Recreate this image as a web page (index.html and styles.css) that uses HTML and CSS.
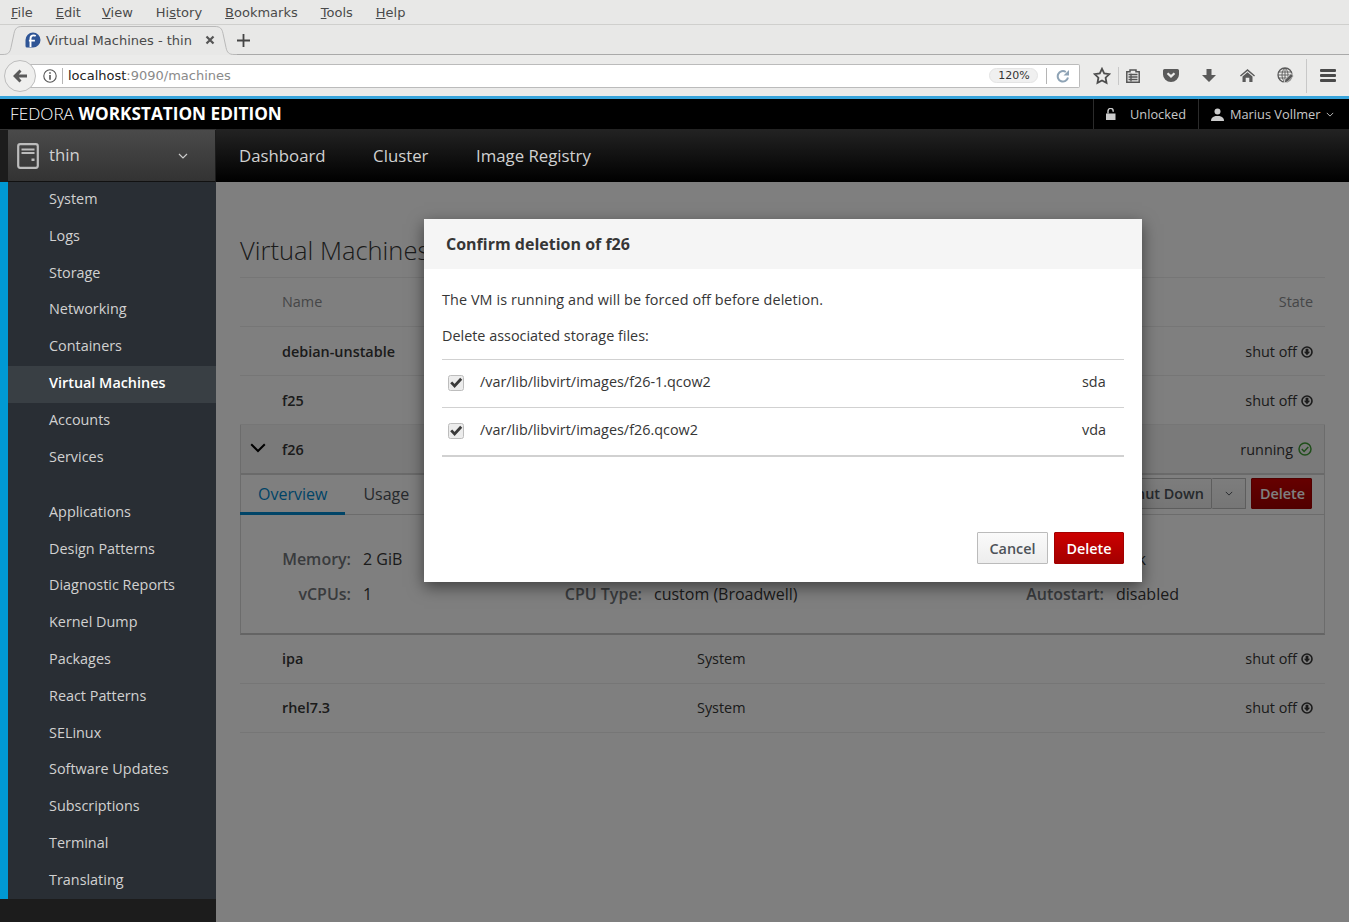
FILE: index.html
```html
<!DOCTYPE html>
<html lang="en">
<head>
<meta charset="utf-8">
<title>Virtual Machines - thin</title>
<link rel="stylesheet" href="styles.css">
</head>
<body>
<svg class="defs" width="0" height="0" aria-hidden="true">
  <symbol id="off" viewBox="0 0 12 12"><circle cx="6" cy="6" r="5" fill="none" stroke="currentColor" stroke-width="1.6"/><path d="M4.600 2.700h2.800v3h1.700L6 9.300 2.900 5.700h1.700z" fill="currentColor"/></symbol>
  <symbol id="caret" viewBox="0 0 10 6"><path d="M1 1l4 4 4-4" fill="none" stroke="currentColor" stroke-width="1.2"/></symbol>
  <symbol id="check" viewBox="0 0 16 16"><rect x=".5" y=".5" width="15" height="15" rx="2" fill="#ececec" stroke="#bdbdbd"/><path d="M3.200 7.400l3.400 3.600 6.600-7.200" fill="none" stroke="#3a3a3a" stroke-width="2.800"/></symbol>
</svg>

<div class="menubar">
  <span><u>F</u>ile</span><span><u>E</u>dit</span><span class="m-view"><u>V</u>iew</span><span>Hi<u>s</u>tory</span><span><u>B</u>ookmarks</span><span><u>T</u>ools</span><span><u>H</u>elp</span>
</div>

<div class="tabbar">
  <div class="tab">
    <svg class="tab-shape" width="237" height="30" viewBox="0 0 237 30"><path d="M0 29.500h3c5 0 7-2 8-7l3-14c1-5 3-7 8-7h193c5 0 7 2 8 7l3 14c1 5 3 7 8 7h3" fill="none" stroke="#b9b9b9"/></svg>
    <svg class="favicon" width="16" height="16" viewBox="0 0 16 16"><path d="M8 .5a7.500 7.500 0 0 1 0 15H2A1.500 1.500 0 0 1 .5 14V8A7.500 7.500 0 0 1 8 .5z" fill="#2f5596"/><path d="M5.500 15V6.600C5.500 4.600 7 3.400 8.700 3.400c.8 0 1.400.2 2 .6M3.900 8.600h6" fill="none" stroke="#fff" stroke-width="1.900"/></svg>
    <span class="tab-title">Virtual Machines - thin</span>
    <svg class="tab-x" width="10" height="10" viewBox="0 0 10 10"><path d="M1.500 1.500l7 7m0-7l-7 7" stroke="#555" stroke-width="2.200"/></svg>
  </div>
  <svg class="newtab" width="13" height="13" viewBox="0 0 13 13"><path d="M6.500 0v13M0 6.500h13" stroke="#444" stroke-width="1.800"/></svg>
</div>

<div class="toolbar">
  <div class="back"><svg width="16" height="16" viewBox="0 0 16 16"><path d="M7.500 1.500L1 8l6.500 6.500 2-2L6.800 9.600H15V6.400H6.800l2.700-2.900z" fill="#5a5a5a"/></svg></div>
  <div class="urlbar">
    <svg class="info" width="14" height="14" viewBox="0 0 14 14"><circle cx="7" cy="7" r="6.200" fill="none" stroke="#555" stroke-width="1.100"/><path d="M6.200 3.200h1.600v1.500H6.200zM6.200 6h1.600v4.800H6.200z" fill="#555"/></svg>
    <span class="url-sep"></span>
    <span class="url"><span class="url-host">localhost</span>:9090/machines</span>
    <span class="zoomlevel">120%</span>
    <span class="url-sep url-sep-r"></span>
    <svg class="reload" width="14" height="14" viewBox="0 0 14 14"><path d="M12 8.500A5.200 5.200 0 1 1 9.800 3" fill="none" stroke="#8ea3b5" stroke-width="2"/><path d="M13 1v5.500H7.500z" fill="#8ea3b5"/></svg>
  </div>
  <div class="tools">
    <svg class="t-star" width="18" height="18" viewBox="0 0 18 18"><path d="M9 1.800l2.200 4.700 5.100.7-3.700 3.500.9 5.100L9 13.400l-4.500 2.400.9-5.100-3.700-3.500 5.100-.7z" fill="none" stroke="#4d4d4d" stroke-width="1.800"/></svg>
    <span class="t-sep"></span>
    <svg class="t-clip" width="14" height="14" viewBox="0 0 14 14"><path d="M.8 2.800h3.200V1h6v1.800h3.200v10.400H.8z" fill="none" stroke="#555" stroke-width="1.500"/><path d="M2.500 5.500h9M2.500 8h9M2.500 10.500h9M5 4.500v8" stroke="#555" stroke-width="1.300"/></svg>
    <svg class="t-pocket" width="16" height="13" viewBox="0 0 16 13"><path d="M1.500 0h13A1.500 1.500 0 0 1 16 1.500V5.500a8 7.500 0 0 1-16 0V1.500A1.500 1.500 0 0 1 1.500 0z" fill="#5a5a5a"/><path d="M4.500 4.200L8 7.400l3.500-3.200" fill="none" stroke="#ebebea" stroke-width="2.200"/></svg>
    <svg class="t-down" width="14" height="13" viewBox="0 0 14 13"><path d="M4.500 0h5v6H14l-7 7-7-7h4.500z" fill="#5a5a5a"/></svg>
    <svg class="t-home" width="15" height="13" viewBox="0 0 15 13"><path d="M7.500 0L15 6.400l-.9 1L7.500 1.900.9 7.400l-.9-1z" fill="#5a5a5a"/><path d="M2.500 7.500L7.500 3.300l5 4.200V13H9.300V8.800H5.700V13H2.500z" fill="#5a5a5a"/></svg>
    <svg class="t-globe" width="17" height="17" viewBox="0 0 17 17"><circle cx="8" cy="8" r="7" fill="none" stroke="#5a5a5a" stroke-width="1.300"/><path d="M1 8h14M1.500 5h13M1.500 11h13M8 1v14M8 1C4 4 4 12 8 15M8 1c4 3 4 11 0 14" fill="none" stroke="#5a5a5a" stroke-width=".9"/><path d="M7 16l1-3.500 6-6 2.500 2.500-6 6z" fill="#5a5a5a" stroke="#ebebea" stroke-width=".8"/></svg>
    <span class="t-sep t-sep-r"></span>
    <svg class="t-menu" width="16" height="13" viewBox="0 0 16 13"><rect width="16" height="3" rx="1" fill="#4a4a4a"/><rect y="5" width="16" height="3" rx="1" fill="#4a4a4a"/><rect y="10" width="16" height="3" rx="1" fill="#4a4a4a"/></svg>
  </div>
</div>

<div class="blueline"></div>

<header class="brandbar">
  <div class="brand"><span class="brand-light">FEDORA</span> <b>WORKSTATION EDITION</b></div>
  <div class="hdr-item hdr-lock">
    <svg width="10" height="12" viewBox="0 0 10 12"><path d="M0 5.500h9.500V12H0z" fill="#ccc"/><path d="M2 5.500V3a2.600 2.600 0 0 1 5.200 0v.7" fill="none" stroke="#ccc" stroke-width="1.400"/></svg>
    <span>Unlocked</span>
  </div>
  <div class="hdr-item hdr-user">
    <svg width="13" height="13" viewBox="0 0 13 13"><circle cx="6.500" cy="3.500" r="3" fill="#ccc"/><path d="M0 13c0-3 1.500-4 4.500-5h4c3 1 4.500 2 4.500 5z" fill="#ccc"/></svg>
    <span>Marius Vollmer</span>
    <svg class="hdr-caret" width="8" height="5"><use href="#caret"/></svg>
  </div>
</header>

<div class="workspace">
  <aside class="sidebar">
    <div class="host">
      <svg class="host-icon" width="22" height="26" viewBox="0 0 22 26"><rect x="1.200" y="1.200" width="19.600" height="23.600" rx="2" fill="none" stroke="#bcbcbc" stroke-width="2.200"/><path d="M4.500 5.500h13v2h-13zM4.500 9h13v2h-13zM14.500 15.500h3v2.500h-3z" fill="#bcbcbc"/></svg>
      <span class="host-name">thin</span>
      <svg class="host-caret" width="10" height="6"><use href="#caret"/></svg>
    </div>
    <nav class="side-nav">
      <ul class="side-group">
        <li>System</li><li>Logs</li><li>Storage</li><li>Networking</li><li>Containers</li><li class="active">Virtual Machines</li><li>Accounts</li><li>Services</li>
      </ul>
      <ul class="side-group">
        <li>Applications</li><li>Design Patterns</li><li>Diagnostic Reports</li><li>Kernel Dump</li><li>Packages</li><li>React Patterns</li><li>SELinux</li><li>Software Updates</li><li>Subscriptions</li><li>Terminal</li><li>Translating</li>
      </ul>
    </nav>
    <div class="side-foot"></div>
  </aside>

  <div class="main-col">
    <nav class="topnav"><span>Dashboard</span><span>Cluster</span><span>Image Registry</span></nav>
    <main class="content">
      <h1 class="page-title">Virtual Machines</h1>
      <div class="vm-table">
        <div class="vm-row vm-head"><span class="c-name">Name</span><span class="c-state">State</span></div>
        <div class="vm-row"><b class="c-name">debian-unstable</b><span class="c-conn">System</span><span class="c-state">shut off <svg class="st" width="12" height="12"><use href="#off"/></svg></span></div>
        <div class="vm-row"><b class="c-name">f25</b><span class="c-conn">System</span><span class="c-state">shut off <svg class="st" width="12" height="12"><use href="#off"/></svg></span></div>
        <div class="vm-open">
          <div class="vm-row vm-open-head">
            <svg class="expander" width="16" height="10" viewBox="0 0 16 10"><path d="M1.200 1.200L8 8l6.800-6.800" fill="none" stroke="#000" stroke-width="2"/></svg>
            <b class="c-name">f26</b><span class="c-conn">System</span><span class="c-state">running <svg class="st st-ok" width="14" height="14" viewBox="0 0 14 14"><circle cx="7" cy="7" r="6" fill="none" stroke="currentColor" stroke-width="1.500"/><path d="M3.800 7l2.300 2.400 4.200-4.400" fill="none" stroke="currentColor" stroke-width="1.500"/></svg></span>
          </div>
          <div class="vm-tabs">
            <span class="vtab vtab-on">Overview</span><span class="vtab">Usage</span><span class="vtab">Disks</span><span class="vtab">Networks</span>
            <div class="vm-actions">
              <div class="btn-group"><span class="btn btn-plain">Shut Down</span><span class="btn btn-plain btn-caret"><svg width="8" height="5"><use href="#caret"/></svg></span></div>
              <span class="btn btn-danger">Delete</span>
            </div>
          </div>
          <div class="vm-details">
            <span class="k">Memory:</span><span class="v">2 GiB</span>
            <span class="k"></span><span class="v"></span>
            <span class="k"></span><span class="v">disk</span>
            <span class="k">vCPUs:</span><span class="v">1</span>
            <span class="k">CPU Type:</span><span class="v">custom (Broadwell)</span>
            <span class="k">Autostart:</span><span class="v">disabled</span>
          </div>
        </div>
        <div class="vm-row vm-row-up"><b class="c-name">ipa</b><span class="c-conn">System</span><span class="c-state">shut off <svg class="st" width="12" height="12"><use href="#off"/></svg></span></div>
        <div class="vm-row vm-row-up"><b class="c-name">rhel7.3</b><span class="c-conn">System</span><span class="c-state">shut off <svg class="st" width="12" height="12"><use href="#off"/></svg></span></div>
      </div>

      <div class="backdrop">
        <section class="modal">
          <h2 class="modal-title">Confirm deletion of f26</h2>
          <div class="modal-body">
            <p class="m-line m-line-wide">The VM is running and will be forced off before deletion.</p>
            <p class="m-line">Delete associated storage files:</p>
            <div class="files">
              <div class="file"><svg width="16" height="16"><use href="#check"/></svg><span class="file-path">/var/lib/libvirt/images/f26-1.qcow2</span><span class="file-dev">sda</span></div>
              <div class="file"><svg width="16" height="16"><use href="#check"/></svg><span class="file-path">/var/lib/libvirt/images/f26.qcow2</span><span class="file-dev">vda</span></div>
            </div>
          </div>
          <div class="modal-foot"><span class="btn btn-cancel">Cancel</span><span class="btn btn-danger">Delete</span></div>
        </section>
      </div>
    </main>
  </div>
</div>
</body>
</html>
```

FILE: styles.css
```css
* { box-sizing: border-box; }
html, body { height: 100%; }
body {
  margin: 0;
  height: 922px;
  overflow: hidden;
  display: flex;
  flex-direction: column;
  font-family: "Open Sans", sans-serif;
  color: #363636;
  background: #fff;
}
.defs { position: absolute; }
ul { list-style: none; margin: 0; padding: 0; }
h1, h2, p { margin: 0; }

/* Browser chrome */
.menubar {
  height: 25px;
  flex: none;
  display: flex;
  align-items: center;
  padding-left: 11px;
  gap: 23px;
  background: #e8e8e7;
  border-bottom: 1px solid #cfcfcd;
  font: 13px "DejaVu Sans", sans-serif;
  color: #4a4a4a;
}
.m-view { margin-left: -2px; }
.tabbar {
  height: 30px;
  flex: none;
  display: flex;
  align-items: center;
  background: #e8e8e7;
  border-bottom: 1px solid #a9a9a9;
  position: relative;
}
.tab {
  position: relative;
  width: 237px;
  height: 30px;
  margin-bottom: -1px;
  display: flex;
  align-items: center;
  font: 13px "DejaVu Sans", sans-serif;
  color: #4a4a4a;
  background: #e8e8e7;
  flex: none;
}
.tab-shape { position: absolute; left: 0; top: 0; }
.favicon { margin-left: 25px; flex: none; position: relative; }
.tab-title { margin-left: 5px; white-space: nowrap; position: relative; }
.tab-x { margin-left: 13px; position: relative; }
.newtab { margin: 2px 0 0 0; }

.toolbar {
  height: 41px;
  flex: none;
  display: flex;
  align-items: center;
  background: #ebebea;
  position: relative;
  padding-left: 4px;
}
.back {
  width: 32px;
  height: 32px;
  flex: none;
  border-radius: 50%;
  background: #efefee;
  border: 1px solid #bdbdbd;
  display: flex;
  align-items: center;
  justify-content: center;
  position: relative;
  z-index: 1;
}
.urlbar {
  margin-left: -6px;
  width: 1050px;
  height: 24px;
  flex: none;
  background: #fff;
  border: 1px solid #bbb;
  border-left: 0;
  border-radius: 0 2px 2px 0;
  display: flex;
  align-items: center;
  font: 13px "DejaVu Sans", sans-serif;
  color: #8a8a8a;
  padding-left: 13px;
}
.info { flex: none; }
.url-sep { width: 1px; height: 16px; background: #b5b5b5; margin: 0 5px 0 5px; flex: none; }
.url { flex: 1; white-space: nowrap; }
.url-host { color: #222; }
.zoomlevel {
  width: 49px;
  height: 15px;
  border-radius: 8px;
  background: #f0f0f0;
  border: 1px solid #e4e4e4;
  color: #333;
  font-size: 11px;
  line-height: 13px;
  text-align: center;
  text-indent: 1px;
  flex: none;
}
.url-sep-r { margin: 0 9px 0 8px; }
.reload { margin-right: 9px; flex: none; }
.tools { display: flex; align-items: center; margin-left: 13px; }
.t-sep { width: 1px; height: 18px; background: #c8c8c8; margin: 0 7px 0 7px; }
.t-sep-r { height: 34px; margin: 0 13px 0 12px; }
.t-clip { margin-right: 23px; }
.t-pocket { margin-right: 23px; }
.t-down { margin-right: 24px; }
.t-home { margin-right: 22px; }
.blueline { height: 3px; flex: none; background: #39a5dc; }

/* Cockpit header */
.brandbar {
  height: 30px;
  flex: none;
  background: #000;
  color: #fff;
  display: flex;
  align-items: stretch;
}
.brand { flex: 1; font-size: 17.200px; line-height: 29px; padding-left: 10px; white-space: nowrap; }
.brand-light { font-weight: 300; }
.brand b { font-weight: 700; }
.hdr-item {
  display: flex;
  align-items: center;
  border-left: 1px solid #2b2b2b;
  color: #c8c8c8;
  font-size: 12.800px;
}
.hdr-lock { width: 105px; padding-left: 12px; gap: 14px; }
.hdr-user { width: 151px; padding-left: 12px; gap: 6px; }
.hdr-caret { margin-left: 0; color: #bbb; }

.workspace { flex: 1; display: flex; min-height: 0; }
.sidebar {
  width: 216px;
  flex: none;
  display: flex;
  flex-direction: column;
  background: #1c1c1c;
  border-top: 1px solid #333;
}
.host {
  margin-left: 8px;
  height: 52px;
  flex: none;
  display: flex;
  align-items: center;
  padding-left: 9px;
  background: linear-gradient(#4a4a4a, #333);
  border-bottom: 1px solid #111;
  margin-right: 1px;
  color: #d1d1d1;
}
.host-name { margin-left: 10px; font-size: 16.800px; line-height: 20px; margin-bottom: 2px; flex: 1; }
.host-caret { margin-right: 27px; color: #ccc; }
.side-nav {
  height: 717px;
  flex: none;
  background: #292e34;
  border-left: 8px solid #0099d3;
}
.side-group { padding-bottom: 18.400px; }
.side-group li {
  height: 36.800px;
  line-height: 34px;
  padding-left: 41px;
  font-size: 14.400px;
  color: #d1d1d1;
}
.side-group li.active { background: #393f44; color: #fff; font-weight: 600; }
.side-foot { flex: 1; }

.main-col { flex: 1; min-width: 0; display: flex; flex-direction: column; }
.topnav {
  height: 53px;
  flex: none;
  background: linear-gradient(#232323, #000);
  display: flex;
  align-items: center;
  padding-left: 23px;
  gap: 47.500px;
  color: #d1d1d1;
  font-size: 16.800px;
}
.content { flex: 1; position: relative; padding: 0 24px; background: #fff; overflow: hidden; }
.page-title { font-weight: 300; font-size: 25.500px; line-height: 36px; margin-top: 50px; color: #363636; white-space: nowrap; }
.vm-table { margin-top: 9px; border-top: 1px solid #ececec; font-size: 14.400px; }
.vm-row {
  height: 49px;
  display: flex;
  align-items: center;
  border-bottom: 1px solid #ececec;
  position: relative;
}
.vm-head { color: #8b8d8f; padding-bottom: 2px; }
.vm-row-up { padding-bottom: 2px; }
.vm-row b { font-weight: 600; }
.vm-row-up .c-conn, .vm-row-up .c-name { top: 14px; }
.c-name { position: absolute; left: 42px; }
.c-conn { position: absolute; left: 457px; }
.c-state { margin-left: auto; margin-right: 12px; display: flex; align-items: center; gap: 4px; }
.st { color: #363636; flex: none; margin-top: 1px; }
.st-ok { color: #3f9c35; margin-top: 0; }

.vm-open { border: 1px solid #d1d1d1; border-width: 1px 1px 2px 1px; border-color: #dcdcdc #d8d8d8 #c8c8c8 #d8d8d8; margin-top: -1px; }
.vm-open-head { height: 50px; background: #f5f5f5; border-bottom: 2px solid #d4d4d4; }
.vm-open-head .c-name { left: 41px; }
.vm-open-head .c-conn { left: 456px; }
.vm-open-head .c-state { margin-right: 12px; gap: 5px; }
.expander { position: absolute; left: 9px; top: 18px; }
.vm-tabs {
  height: 40px;
  display: flex;
  align-items: stretch;
  border-bottom: 1px solid #d8d8d8;
  font-size: 16px;
  position: relative;
  margin-left: -1px;
}
.vtab { padding: 0 18px; line-height: 38px; color: #4d5258; margin-bottom: -1px; }
.vtab-on { color: #0088ce; border-bottom: 3px solid #0088ce; }
.vm-actions { margin-left: auto; margin-right: 12px; padding-bottom: 3px; display: flex; align-items: center; gap: 5px; }
.vm-actions .btn { height: 31px; }
.vm-actions .btn-danger { padding-left: 2px; }
.btn-group { display: flex; }
.btn {
  display: inline-flex;
  align-items: center;
  justify-content: center;
  font-size: 14.400px;
  font-weight: 600;
  height: 32px;
  border-radius: 1px;
}
.btn-plain { background: linear-gradient(#fafafa, #ededed); border: 1px solid #bbb; color: #4d5258; padding: 0 7px 0 12px; }
.btn-caret { width: 34px; padding: 0; border-left: 0; margin-left: 0; }
.btn-danger { width: 61px; background: linear-gradient(#cc0000, #a30000); border: 1px solid #a30000; color: #fff; }
.vm-details {
  height: 118px;
  padding: 26px 0 0 41px;
  display: grid;
  grid-template-columns: 69px 190px 77px 361px 77px 1fr;
  grid-auto-rows: 35px;
  column-gap: 12px;
  align-items: center;
  font-size: 16px;
  white-space: nowrap;
}
.k { text-align: right; color: #72767b; font-weight: 600; justify-self: end; }
.v { color: #363636; }

/* Modal */
.backdrop { position: absolute; inset: 0; background: rgba(0,0,0,.5); }
.modal {
  position: absolute;
  left: 208px;
  top: 37px;
  width: 718px;
  height: 363px;
  background: #fff;
  box-shadow: 0 5px 15px rgba(0,0,0,.5);
  display: flex;
  flex-direction: column;
}
.modal-title {
  height: 50px;
  flex: none;
  background: #f5f5f5;
  padding-left: 22px;
  font-size: 16px;
  line-height: 50px;
  font-weight: 700;
  color: #363636;
}
.modal-body { padding: 21px 18px 0; font-size: 14.400px; }
.m-line { line-height: 20px; margin-bottom: 16px; }
.m-line-wide { letter-spacing: .09px; }
.files { margin-top: -3px; border-top: 1px solid #d1d1d1; }
.file { height: 48px; display: flex; align-items: center; padding-left: 6px; border-bottom: 1px solid #d1d1d1; }
.file:last-child { border-bottom-width: 2px; height: 49px; }
.file-path { margin-left: 16px; flex: 1; }
.file-dev { width: 42px; }
.file svg { margin-bottom: 2px; }
.file-path, .file-dev { margin-bottom: 4px; }
.modal-foot { margin-top: auto; padding: 0 18px 18px; display: flex; justify-content: flex-end; gap: 6px; }
.btn-cancel { width: 71px; background: linear-gradient(#fafafa, #ededed); border: 1px solid #bbb; color: #4d5258; }
.modal-foot .btn-danger { width: 70px; }
```
